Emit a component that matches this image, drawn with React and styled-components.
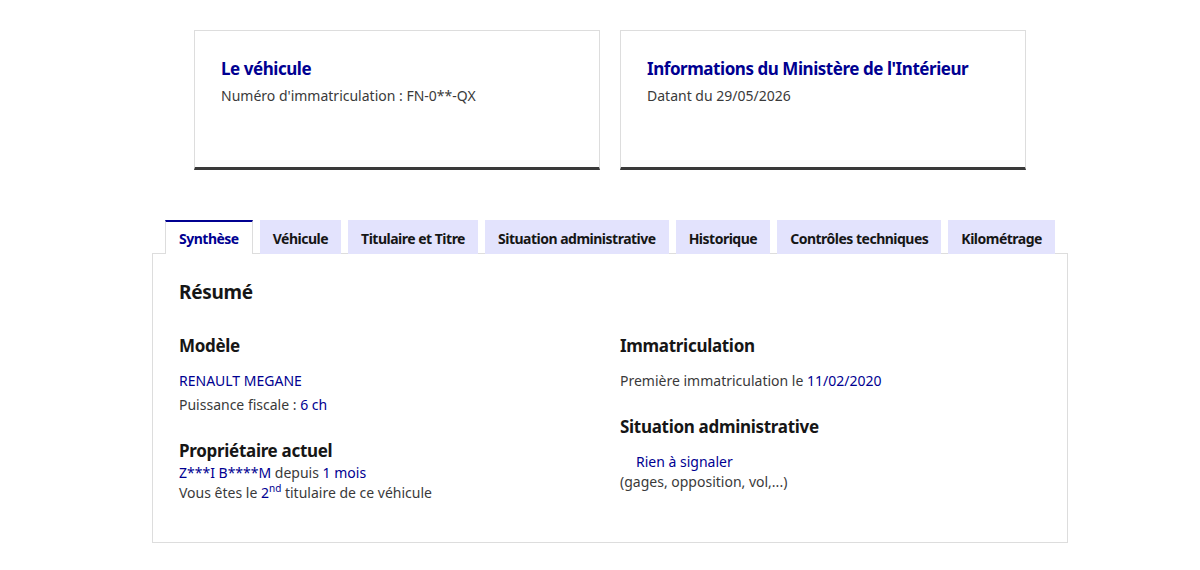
import React from "react";
import styled, { createGlobalStyle } from "styled-components";

const GlobalStyle = createGlobalStyle`
  * { box-sizing: border-box; }
  body {
    margin: 0;
    background: #fff;
    font-family: "Noto Sans", "Liberation Sans", sans-serif;
    color: #3a3a3a;
  }
`;

const tabs = [
  "Synthèse",
  "Véhicule",
  "Titulaire et Titre",
  "Situation administrative",
  "Historique",
  "Contrôles techniques",
  "Kilométrage",
];

const App = () => {
  return (
    <>
      <GlobalStyle />
      <Page>
        <CardRow>
          <Card>
            <CardTitle>Le véhicule</CardTitle>
            <CardText>Numéro d'immatriculation : FN-0**-QX</CardText>
          </Card>
          <Card>
            <CardTitle>Informations du Ministère de l'Intérieur</CardTitle>
            <CardText>Datant du 29/05/2026</CardText>
          </Card>
        </CardRow>

        <Tabs>
          <TabList>
            {tabs.map((t, i) => (
              <Tab key={t} $active={i === 0}>
                {t}
              </Tab>
            ))}
          </TabList>
          <Panel>
            <PanelTitle>Résumé</PanelTitle>
            <Columns>
              <Column>
                <Section>
                  <SectionTitle>Modèle</SectionTitle>
                  <Lines $gap={4}>
                    <Line>
                      <Value>RENAULT MEGANE</Value>
                    </Line>
                    <Line>
                      Puissance fiscale : <Value>6 ch</Value>
                    </Line>
                  </Lines>
                </Section>
                <Section>
                  <SectionTitle $tight>Propriétaire actuel</SectionTitle>
                  <Lines>
                    <Line>
                      <Value>Z***I B****M</Value> depuis <Value>1 mois</Value>
                    </Line>
                    <Line>
                      Vous êtes le <Value>2<sup>nd</sup></Value> titulaire de ce
                      véhicule
                    </Line>
                  </Lines>
                </Section>
              </Column>
              <Column>
                <Section>
                  <SectionTitle>Immatriculation</SectionTitle>
                  <Line>
                    Première immatriculation le <Value>11/02/2020</Value>
                  </Line>
                </Section>
                <Section>
                  <SectionTitle>Situation administrative</SectionTitle>
                  <Lines>
                    <Line $indent>
                      <Value>Rien à signaler</Value>
                    </Line>
                    <Line>(gages, opposition, vol,...)</Line>
                  </Lines>
                </Section>
              </Column>
            </Columns>
          </Panel>
        </Tabs>
      </Page>
    </>
  );
};

const Page = styled.div`
  width: 916px;
  margin-left: calc(50% - 448px);
  padding-top: 30px;
`;

const CardRow = styled.div`
  display: grid;
  grid-template-columns: 406px 406px;
  gap: 20px;
  justify-content: center;
`;

const Card = styled.div`
  height: 140px;
  border: 1px solid #dddddd;
  border-bottom: 3px solid #3a3a3a;
  padding: 26px 26px;
`;

const CardTitle = styled.h3`
  margin: 0 0 5px;
  font-size: 17px;
  line-height: 24px;
  font-weight: 700;
  letter-spacing: -0.45px;
  color: #000091;
`;

const CardText = styled.p`
  margin: 0;
  font-size: 14px;
  line-height: 20px;
  color: #3a3a3a;
`;

const Tabs = styled.div`
  margin-top: 50px;
`;

const TabList = styled.div`
  display: flex;
  gap: 7px;
  padding-left: 13px;
`;

const Tab = styled.div`
  height: 34px;
  padding: 0 13px;
  display: flex;
  align-items: center;
  white-space: nowrap;
  font-size: 14px;
  font-weight: 700;
  letter-spacing: -0.5px;
  color: ${(p) => (p.$active ? "#000091" : "#161616")};
  background: ${(p) => (p.$active ? "#fff" : "#e3e3fd")};
  border-top: 2px solid ${(p) => (p.$active ? "#000091" : "transparent")};
  border-left: ${(p) => (p.$active ? "1px solid #dddddd" : "none")};
  border-right: ${(p) => (p.$active ? "1px solid #dddddd" : "none")};
  margin-bottom: -1px;
  position: relative;
  z-index: 1;
`;

const Panel = styled.div`
  border: 1px solid #dddddd;
  height: 290px;
  padding: 24px 26px 0;
`;

const PanelTitle = styled.h2`
  margin: 0 0 28px;
  font-size: 19px;
  line-height: 28px;
  font-weight: 700;
  letter-spacing: -0.3px;
  color: #161616;
`;

const Columns = styled.div`
  display: grid;
  grid-template-columns: 1fr 1fr;
  column-gap: 20px;
`;

const Column = styled.div`
  display: flex;
  flex-direction: column;
  gap: 24px;
`;

const Section = styled.div``;

const SectionTitle = styled.h4`
  margin: 0 0 ${(p) => (p.$tight ? "0" : "13px")};
  font-size: 17px;
  line-height: 24px;
  font-weight: 700;
  letter-spacing: -0.3px;
  color: #161616;
`;

const Lines = styled.div`
  display: flex;
  flex-direction: column;
  gap: ${(p) => p.$gap || 0}px;
`;

const Line = styled.div`
  font-size: 14px;
  line-height: 20px;
  color: #3a3a3a;
  padding-left: ${(p) => (p.$indent ? "16px" : "0")};

  sup {
    font-size: 10px;
    line-height: 0;
  }
`;

const Value = styled.span`
  color: #000091;
`;

export default App;
